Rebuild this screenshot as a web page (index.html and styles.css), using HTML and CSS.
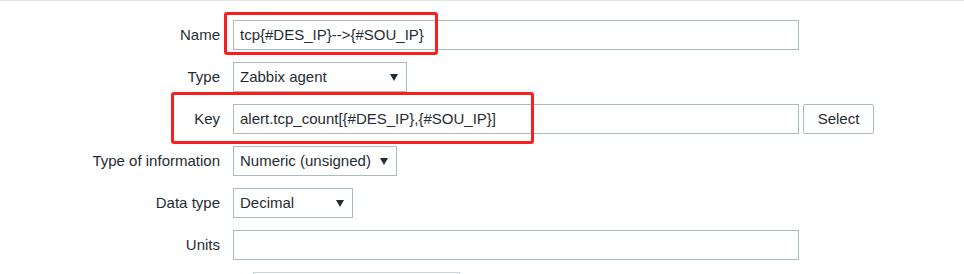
FILE: index.html
```html
<!DOCTYPE html>
<html>
<head>
<meta charset="utf-8">
<link rel="stylesheet" href="styles.css">
</head>
<body>
<div class="page">
  <form class="form">
    <div class="row">
      <label class="label">Name</label>
      <div class="field"><div class="input wide">tcp{#DES_IP}--&gt;{#SOU_IP}</div></div>
    </div>
    <div class="row">
      <label class="label">Type</label>
      <div class="field"><div class="select w-type"><span>Zabbix agent</span><span class="arrow"></span></div></div>
    </div>
    <div class="row">
      <label class="label">Key</label>
      <div class="field"><div class="input wide">alert.tcp_count[{#DES_IP},{#SOU_IP}]</div><div class="button">Select</div></div>
    </div>
    <div class="row">
      <label class="label">Type of information</label>
      <div class="field"><div class="select w-info"><span>Numeric (unsigned)</span><span class="arrow"></span></div></div>
    </div>
    <div class="row">
      <label class="label">Data type</label>
      <div class="field"><div class="select w-data"><span>Decimal</span><span class="arrow"></span></div></div>
    </div>
    <div class="row">
      <label class="label">Units</label>
      <div class="field"><div class="input wide"></div></div>
    </div>
    <div class="row">
      <label class="label"></label>
      <div class="field"><div class="partial"></div></div>
    </div>
  </form>
  <div class="mark mark-name"></div>
  <div class="mark mark-key"></div>
</div>
</body>
</html>
```
FILE: styles.css
```css
html, body {
  margin: 0;
  padding: 0;
  background: #ffffff;
}
body {
  font-family: "Liberation Sans", Arial, sans-serif;
  font-size: 15px;
  color: #1f2c33;
  overflow: hidden;
}
.page {
  position: relative;
  border-top: 1px solid #dfe4e7;
  height: 273px;
  overflow: hidden;
}
.form {
  display: flex;
  flex-direction: column;
  gap: 12px;
  padding-top: 19px;
}
.row {
  display: grid;
  grid-template-columns: 220px 1fr;
  column-gap: 13px;
  align-items: center;
  height: 30px;
}
.label {
  text-align: right;
  white-space: nowrap;
  line-height: 30px;
}
.field {
  display: flex;
  gap: 4px;
  align-items: center;
}
.input, .select, .button {
  box-sizing: border-box;
  height: 30px;
  border: 1px solid #acbbc2;
  background: #ffffff;
  line-height: 28px;
  white-space: nowrap;
}
.input {
  padding: 0 6px;
}
.wide {
  width: 566px;
}
.select {
  display: flex;
  justify-content: space-between;
  align-items: center;
  padding: 0 8px 0 6px;
}
.arrow {
  width: 0;
  height: 0;
  border-left: 4px solid transparent;
  border-right: 4px solid transparent;
  border-top: 7px solid #1f2c33;
  margin-top: 1px;
}
.w-type { width: 174px; }
.w-info { width: 164px; }
.w-data { width: 120px; }
.button {
  width: 71px;
  text-align: center;
  border-radius: 2px;
}
.partial {
  box-sizing: border-box;
  margin-left: 20px;
  width: 207px;
  height: 30px;
  border: 1px solid #cfd6da;
}
.mark {
  position: absolute;
  box-sizing: border-box;
  border: 3px solid #fa1e1e;
  border-radius: 3px;
}
.mark-name {
  left: 224px;
  top: 11px;
  width: 214px;
  height: 43px;
}
.mark-key {
  left: 171px;
  top: 91px;
  width: 363px;
  height: 52px;
}
```
